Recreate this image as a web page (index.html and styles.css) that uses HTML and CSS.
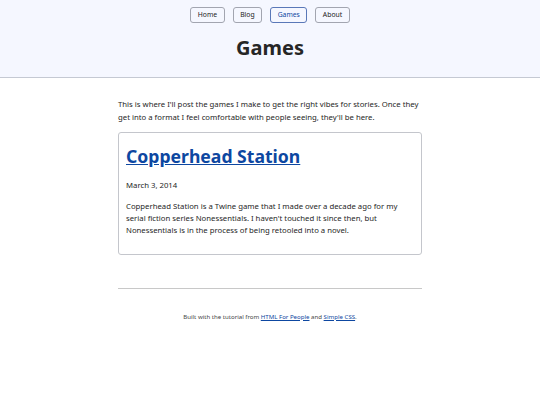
FILE: index.html
```html
<!DOCTYPE html>
<html lang="en">
<head>
<meta charset="utf-8">
<title>Games</title>
<link rel="stylesheet" href="styles.css">
</head>
<body>
<header class="site-header">
  <nav class="nav">
    <a class="nav-link" href="#">Home</a>
    <a class="nav-link" href="#">Blog</a>
    <a class="nav-link current" href="#">Games</a>
    <a class="nav-link" href="#">About</a>
  </nav>
  <h1 class="title">Games</h1>
</header>
<main class="main">
  <p class="intro">This is where I'll post the games I make to get the right vibes for stories. Once they get into a format I feel comfortable with people seeing, they'll be here.</p>
  <article class="card">
    <h2 class="card-title"><a href="#">Copperhead Station</a></h2>
    <p class="card-date">March 3, 2014</p>
    <p class="card-text">Copperhead Station is a Twine game that I made over a decade ago for my serial fiction series Nonessentials. I haven't touched it since then, but Nonessentials is in the process of being retooled into a novel.</p>
  </article>
</main>
<footer class="footer">
  <p class="footer-text">Built with the tutorial from <a href="#">HTML For People</a> and <a href="#">Simple CSS</a>.</p>
</footer>
</body>
</html>
```
FILE: styles.css
```css
html, body {
  margin: 0;
  padding: 0;
}
body {
  font-family: "Noto Sans", "Open Sans", sans-serif;
  color: #262626;
  background: #fff;
  font-size: 7.75px;
  line-height: 1.5;
}
a {
  color: #0d47a1;
}
.site-header {
  background: #f5f7ff;
  border-bottom: 1px solid #c5c9d3;
  padding: 7px 0 14px;
  text-align: center;
}
.nav {
  display: flex;
  justify-content: center;
  gap: 8px;
}
.nav-link {
  display: block;
  border: 1px solid #a2a5b0;
  border-radius: 3px;
  padding: 1px 6.5px;
  color: #212121;
  text-decoration: none;
  font-size: 6.8px;
  line-height: 12px;
  background: #f5f7ff;
}
.nav-link.current {
  color: #0d47a1;
  border-color: #5a78b8;
}
.title {
  margin: 10px 0 0;
  font-size: 20px;
  line-height: 30px;
  font-weight: 700;
}
.main {
  width: 304px;
  margin: 0 auto;
  padding-top: 20px;
}
.intro {
  margin: 0 0 8px;
  line-height: 13px;
}
.card {
  border: 1px solid #c4c6cc;
  border-radius: 3px;
  padding: 8px 7px 18px;
}
.card-title {
  margin: 0;
  font-size: 17.6px;
  line-height: 30px;
}
.card-date {
  margin: 9px 0 0;
}
.card-text {
  margin: 8px 0 0;
  line-height: 12px;
}
.footer {
  width: 304px;
  margin: 33px auto 0;
  border-top: 1px solid #c8c8c8;
  text-align: center;
  color: #444;
}
.footer-text {
  margin: 23px 0;
  font-size: 6.1px;
}
```
